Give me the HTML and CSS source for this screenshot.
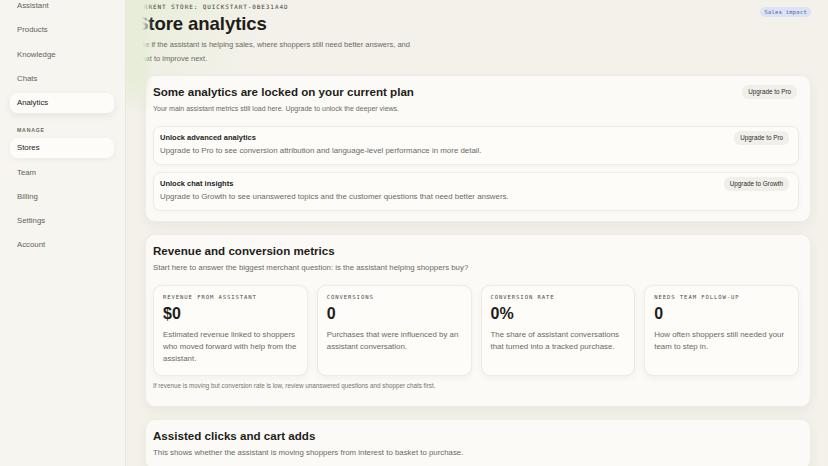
FILE: index.html
```html
<!DOCTYPE html>
<html lang="en">
<head>
  <meta charset="UTF-8" />
  <meta name="viewport" content="width=device-width, initial-scale=1" />
  <title>Store analytics</title>
  <link rel="stylesheet" href="styles.css">
</head>
<body>
  <div class="app">
    <aside class="sidebar">
      <nav class="nav">
        <a class="nav-item">Assistant</a>
        <a class="nav-item">Products</a>
        <a class="nav-item">Knowledge</a>
        <a class="nav-item">Chats</a>
        <a class="nav-item active">Analytics</a>
        <div class="nav-label">Manage</div>
        <a class="nav-item active soft">Stores</a>
        <a class="nav-item">Team</a>
        <a class="nav-item">Billing</a>
        <a class="nav-item">Settings</a>
        <a class="nav-item">Account</a>
      </nav>
    </aside>

    <main class="main">
      <div class="edge-glow"></div>

      <header class="page-head">
        <span class="eyebrow">Current store: quickstart-0be31a4d</span>
        <span class="badge">Sales impact</span>
        <h1>Store analytics</h1>
        <p class="lede">See if the assistant is helping sales, where shoppers still need better answers, and what to improve next.</p>
      </header>

      <!-- Plan limits -->
      <section class="card">
        <div class="card-head">
          <h2>Some analytics are locked on your current plan</h2>
          <button class="btn">Upgrade to Pro</button>
        </div>
        <p class="card-sub small">Your main assistant metrics still load here. Upgrade to unlock the deeper views.</p>

        <div class="locks">
          <div class="lock">
            <div class="lock-head">
              <h3>Unlock advanced analytics</h3>
              <button class="btn">Upgrade to Pro</button>
            </div>
            <p>Upgrade to Pro to see conversion attribution and language-level performance in more detail.</p>
          </div>
          <div class="lock">
            <div class="lock-head">
              <h3>Unlock chat insights</h3>
              <button class="btn">Upgrade to Growth</button>
            </div>
            <p>Upgrade to Growth to see unanswered topics and the customer questions that need better answers.</p>
          </div>
        </div>
      </section>

      <!-- Revenue metrics -->
      <section class="card">
        <h2>Revenue and conversion metrics</h2>
        <p class="card-sub">Start here to answer the biggest merchant question: is the assistant helping shoppers buy?</p>

        <div class="metrics">
          <div class="metric">
            <div class="metric-label">Revenue from assistant</div>
            <div class="metric-value">$0</div>
            <p>Estimated revenue linked to shoppers who moved forward with help from the assistant.</p>
          </div>
          <div class="metric">
            <div class="metric-label">Conversions</div>
            <div class="metric-value">0</div>
            <p>Purchases that were influenced by an assistant conversation.</p>
          </div>
          <div class="metric">
            <div class="metric-label">Conversion rate</div>
            <div class="metric-value">0%</div>
            <p>The share of assistant conversations that turned into a tracked purchase.</p>
          </div>
          <div class="metric">
            <div class="metric-label">Needs team follow-up</div>
            <div class="metric-value">0</div>
            <p>How often shoppers still needed your team to step in.</p>
          </div>
        </div>

        <p class="footnote">If revenue is moving but conversion rate is low, review unanswered questions and shopper chats first.</p>
      </section>

      <!-- Clicks and cart -->
      <section class="card">
        <h2>Assisted clicks and cart adds</h2>
        <p class="card-sub">This shows whether the assistant is moving shoppers from interest to basket to purchase.</p>
      </section>
    </main>
  </div>
</body>
</html>
```

FILE: styles.css
```css
:root {
  --ink: #1e1d1a;
  --muted: #6c6a63;
  --side-bg: #f7f5f0;
  --main-bg: #f3f1ea;
  --card-bg: #fbfaf6;
  --inner-bg: #fdfcf9;
  --line: #ebe8df;
  --sans: "Liberation Sans", Arial, sans-serif;
  --mono: "DejaVu Sans Mono", "Liberation Mono", monospace;
}

* {
  box-sizing: border-box;
}

html, body {
  margin: 0;
  height: 100%;
  overflow: hidden;
}

body {
  font-family: var(--sans);
  color: var(--ink);
  background: var(--main-bg);
}

.app {
  display: flex;
  height: 466px;
}

/* Sidebar */
.sidebar {
  width: 126px;
  flex: none;
  background: var(--side-bg);
  border-right: 1px solid #e9e6dd;
  padding: 0 11px 0 10px;
}

.nav {
  display: flex;
  flex-direction: column;
  gap: 4.3px;
  margin-top: -4px;
}

.nav-item {
  display: block;
  height: 20px;
  line-height: 20px;
  padding-left: 7px;
  font-size: 7.8px;
  color: #64625c;
  border-radius: 7px;
}

.nav-item.active {
  background: #fdfcf9;
  color: #232220;
  box-shadow: 0 3px 7px rgba(60, 50, 30, 0.08);
}

.nav-item.soft {
  box-shadow: 0 2px 5px rgba(60, 50, 30, 0.05);
}

.nav-label {
  margin-top: 8.5px;
  padding-left: 7px;
  height: 8px;
  line-height: 8px;
  font-size: 5.2px;
  font-weight: 700;
  letter-spacing: 0.8px;
  text-transform: uppercase;
  color: #6a6862;
}

/* Main column */
.main {
  position: relative;
  flex: 1;
  padding: 2px 17px 0 19px;
  background:
    radial-gradient(ellipse 140px 110px at 0 0, rgba(226, 236, 208, 0.7), rgba(226, 236, 208, 0) 100%),
    var(--main-bg);
}

.edge-glow {
  position: absolute;
  left: 0;
  top: 0;
  width: 26px;
  height: 112px;
  background: linear-gradient(to right, #e7edd8 66%, rgba(231, 237, 216, 0));
  filter: blur(1.5px);
  -webkit-mask-image: linear-gradient(to bottom, #000 72%, transparent);
  mask-image: linear-gradient(to bottom, #000 72%, transparent);
  z-index: 2;
}

.page-head {
  display: grid;
  grid-template-columns: 1fr auto;
  margin-left: -9px;
}

.eyebrow {
  margin-left: -1px;
  font-family: var(--mono);
  font-size: 6px;
  line-height: 10px;
  letter-spacing: 0.9px;
  text-transform: uppercase;
  color: #3d3c38;
}

.badge {
  grid-column: 2;
  grid-row: 1 / span 2;
  align-self: start;
  margin-top: 5px;
  height: 10px;
  line-height: 10px;
  padding: 0 4px;
  border-radius: 5px;
  background: #dce3f4;
  color: #4b5fa6;
  font-family: var(--mono);
  font-size: 5.4px;
  letter-spacing: 0.3px;
}

h1 {
  grid-column: 1;
  margin: 1px 0 0;
  font-size: 18.6px;
  line-height: 22px;
  font-weight: 700;
  letter-spacing: -0.1px;
}

.lede {
  grid-column: 1;
  margin: 3px 0 9px;
  max-width: 282px;
  font-size: 7.5px;
  line-height: 14px;
  color: var(--muted);
}

/* Cards */
.card {
  background: var(--card-bg);
  border: 1px solid #efece4;
  border-radius: 10px;
  padding: 9px 11px 10px 7px;
  margin-bottom: 12px;
  box-shadow: 0 4px 12px rgba(70, 60, 40, 0.06);
}

.card-head {
  display: flex;
  align-items: center;
  justify-content: space-between;
}

h2 {
  margin: 0;
  font-size: 11.6px;
  line-height: 14px;
  font-weight: 700;
}

.card-sub {
  margin: 4px 0 0;
  font-size: 7.85px;
  line-height: 12px;
  color: var(--muted);
}

.card-sub.small {
  font-size: 7px;
}

.btn {
  font-family: var(--sans);
  font-size: 6.3px;
  line-height: 14px;
  height: 14px;
  padding: 0 6px;
  border: none;
  border-radius: 6px;
  background: #f1efe9;
  color: #2c2b28;
  margin-right: 2px;
}

.locks {
  display: flex;
  flex-direction: column;
  gap: 7px;
  margin-top: 11px;
}

.lock {
  background: var(--inner-bg);
  border: 1px solid #efece5;
  border-radius: 8px;
  padding: 5px 7px 7px 6px;
  box-shadow: 0 1px 4px rgba(70, 60, 40, 0.04);
}

.lock-head {
  display: flex;
  align-items: center;
  justify-content: space-between;
  height: 12px;
}

h3 {
  margin: 0;
  font-size: 7.5px;
  line-height: 12px;
  font-weight: 700;
}

.lock p {
  margin: 1px 0 0;
  font-size: 7.9px;
  line-height: 12px;
  color: var(--muted);
}

/* Metrics */
.metrics {
  display: grid;
  grid-template-columns: repeat(4, 1fr);
  gap: 9px;
  margin-top: 11px;
}

.metric {
  background: var(--inner-bg);
  border: 1px solid #eeebe3;
  border-radius: 9px;
  padding: 7px 9px 10px 9px;
  box-shadow: 0 2px 6px rgba(70, 60, 40, 0.05);
}

.metric-label {
  font-family: var(--mono);
  font-size: 5.6px;
  line-height: 8px;
  letter-spacing: 0.9px;
  text-transform: uppercase;
  color: #4d4c48;
}

.metric-value {
  margin-top: 3px;
  font-size: 16px;
  line-height: 20px;
  font-weight: 700;
}

.metric p {
  margin: 5px 0 0;
  font-size: 7.9px;
  line-height: 12px;
  color: var(--muted);
}

.footnote {
  margin: 6px 0 6px;
  font-size: 6.3px;
  line-height: 8px;
  color: #76746d;
}
```
